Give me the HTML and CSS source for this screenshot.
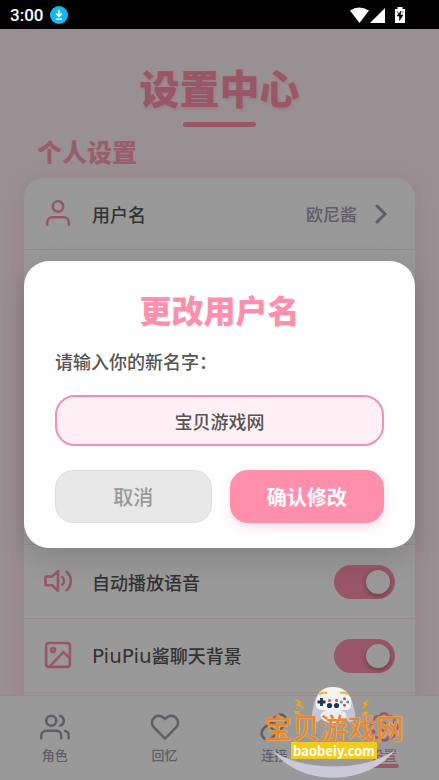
FILE: index.html
```
<!DOCTYPE html>
<html lang="zh-CN">
<head>
  <meta charset="UTF-8" />
  <meta name="viewport" content="width=device-width, initial-scale=1.0"/>
  <title>设置中心</title>
  <link rel="stylesheet" href="styles.css">
</head>
<body>
  <header class="status-bar">
    <span class="time">3:00</span>
    <svg class="download" viewBox="0 0 18 18">
      <circle cx="9" cy="9" r="9" fill="#12b9f5"/>
      <path d="M9 4v6M6.2 7.500L9 10.300 11.800 7.500M6 13.200h6" fill="none" stroke="#fff" stroke-width="1.600"/>
    </svg>
    <svg class="signals" viewBox="0 0 56 18">
      <path d="M0 4.500Q9-1.500 19 4.500L9.500 17z" fill="#fff"/>
      <path d="M20 17L35 2v15z" fill="#fff"/>
      <path d="M47.500 1h5v2h2.500v14h-10V3h2.500z" fill="#fff"/>
      <path d="M51 5l-4 5h2.500v4.500L53 9h-2.500zM47 5l1.500 3M53 5v2" fill="#000" stroke="#000" stroke-width=".6"/>
    </svg>
  </header>

  <div class="screen">
    <main class="settings">
      <h1>设置中心</h1>
      <h2>个人设置</h2>
      <ul class="card">
        <li class="row row-link">
          <svg class="icon" viewBox="0 0 24 24"><circle cx="12" cy="5" r="4.800"/><path d="M2 22v-2a5 5 0 0 1 5-5h10a5 5 0 0 1 5 5v2"/></svg>
          <span class="label">用户名</span>
          <span class="value">欧尼酱</span>
          <svg class="chevron" viewBox="0 0 12 18"><path d="M2 1l8 8-8 8"/></svg>
        </li>
        <li class="row row-group"></li>
        <li class="row">
          <svg class="icon" viewBox="0 0 24 24"><path d="M12 2L6.500 7H.5v8h6l5.500 5zM16 7.500a5 5 0 0 1 0 7M20 2.500a11.500 11.500 0 0 1 0 17"/></svg>
          <label class="label" for="autoplay">自动播放语音</label>
          <input class="switch" type="checkbox" id="autoplay" checked />
        </li>
        <li class="row">
          <svg class="icon" viewBox="0 0 24 24"><rect x="1" y="0" width="22" height="22" rx="2.500"/><circle cx="7.500" cy="6.500" r="1.800"/><path d="M23 14l-6-5.500L4 22"/></svg>
          <label class="label" for="chatbg"><span class="latin">PiuPiu</span>酱聊天背景</label>
          <input class="switch" type="checkbox" id="chatbg" checked />
        </li>
        <li class="row"></li>
      </ul>
    </main>

    <nav class="tabs">
      <a href="#roles">
        <svg viewBox="0 0 24 24"><path d="M17 21v-2a4 4 0 0 0-4-4H5a4 4 0 0 0-4 4v2"/><circle cx="9" cy="7" r="4"/><path d="M23 21v-2a4 4 0 0 0-3-3.870M16 3.130a4 4 0 0 1 0 7.750"/></svg>
        <span>角色</span>
      </a>
      <a href="#memories">
        <svg viewBox="0 0 24 24"><path d="M20.840 4.610a5.500 5.500 0 0 0-7.780 0L12 5.670l-1.060-1.060a5.500 5.500 0 0 0-7.780 7.780L12 21.230l8.840-8.840a5.500 5.500 0 0 0 0-7.780z"/></svg>
        <span>回忆</span>
      </a>
      <a href="#connect">
        <svg viewBox="0 0 24 24"><path d="M10 13a5 5 0 0 0 7.540.540l3-3a5 5 0 0 0-7.070-7.070l-1.720 1.710"/><path d="M14 11a5 5 0 0 0-7.540-.540l-3 3a5 5 0 0 0 7.070 7.070l1.710-1.710"/></svg>
        <span>连接</span>
      </a>
      <a href="#settings" class="active">
        <svg viewBox="0 0 24 24"><circle cx="12" cy="12" r="3"/><path d="M8.600 3.900a3.500 3.500 0 0 1 6.800 0a3.500 3.500 0 0 1 4.700 4.700a3.500 3.500 0 0 1 0 6.800a3.500 3.500 0 0 1-4.700 4.700a3.500 3.500 0 0 1-6.800 0a3.500 3.500 0 0 1-4.700-4.700a3.500 3.500 0 0 1 0-6.800a3.500 3.500 0 0 1 4.700-4.700z"/></svg>
        <span>设置</span>
      </a>
    </nav>

    <div class="overlay">
      <form class="modal" role="dialog" aria-labelledby="modal-title">
        <h3 id="modal-title">更改用户名</h3>
        <label for="username">请输入你的新名字：</label>
        <input type="text" id="username" value="宝贝游戏网" />
        <div class="actions">
          <button type="button" class="cancel">取消</button>
          <button type="button" class="confirm">确认修改</button>
        </div>
      </form>
    </div>

    <div class="brand">
      <svg class="brand-art" viewBox="0 0 142 94">
        <path d="M9 64C35 84 98 88 132 64C105 99 40 103 9 64z" fill="#c9c9d8"/>
        <path d="M52 14Q56 1 70 1T89 14L92 27Q93 34 88 36Q84 36 81 30L60 30Q57 36 53 36Q48 34 49 27z" fill="#c3c5d6"/>
        <path d="M53 14Q57 1 70 1T88 14Q90 24 82 24H59Q51 24 53 14z" fill="#f4f4f4"/>
        <ellipse cx="70.500" cy="30" rx="13" ry="7" fill="#ececf0"/>
        <path d="M56 8.500q4-3 8-1.500M77 7q4-1.500 8 1.500" fill="none" stroke="#efb52f" stroke-width="2"/>
        <path d="M58.500 12v8M54.500 16h8" stroke="#20364e" stroke-width="2.800"/>
        <circle cx="81.500" cy="12.800" r="1.500" fill="#d94c4c"/><circle cx="81.500" cy="19.200" r="1.500" fill="#d94c4c"/>
        <circle cx="78.300" cy="16" r="1.500" fill="#38a7b8"/><circle cx="84.700" cy="16" r="1.500" fill="#38a7b8"/>
        <circle cx="66.500" cy="14.500" r="1.500" fill="#d94c4c"/><circle cx="73.500" cy="14.500" r="1.500" fill="#d94c4c"/>
        <circle cx="66.500" cy="19.500" r="2.600" fill="#20364e"/><circle cx="73.500" cy="19.500" r="2.600" fill="#20364e"/>
        <path d="M31 12l8 4-2 2 5 5-9-4 2-2zM31 25l6 0-1 2 4 2-8-1zM107 12l-8 6 3 1-4 5 8-6-3-1zM107 25l-8 1 2 1-3 3 8-3-2-1z" fill="#efa51d"/>
      </svg>
      <span class="brand-name">宝贝游戏网</span>
      <span class="brand-site">baobeiy.com</span>
    </div>
  </div>
</body>
</html>
```

FILE: styles.css
```
* {
  box-sizing: border-box;
}

body {
  margin: 0;
  height: 100vh;
  display: flex;
  flex-direction: column;
  overflow: hidden;
  font-family: "Noto Sans CJK SC", sans-serif;
  font-weight: 500;
  color: #555;
}

h1, h2, h3 {
  margin: 0;
  color: #ff8fab;
  font-weight: 900;
}

svg {
  display: block;
  flex: none;
}

.status-bar {
  display: flex;
  align-items: center;
  height: 29px;
  padding: 0 33px 0 10px;
  background: #000;
  color: #fff;
}

.time {
  font-family: Roboto, sans-serif;
  font-size: 17px;
}

.download {
  width: 18px;
  height: 18px;
  margin-left: 7px;
}

.signals {
  width: 56px;
  height: 18px;
  margin-left: auto;
}

.screen {
  position: relative;
  flex: 1;
  min-height: 0;
  display: flex;
  flex-direction: column;
  background: #fff0f5;
}

.settings {
  flex: 1;
  min-height: 0;
  overflow: hidden;
  padding: 32px 24px 0;
}

h1 {
  font-size: 40px;
  line-height: 52px;
  text-align: center;
  text-shadow: 1px 2px 3px rgba(255, 143, 171, 0.3);
}

h1::after {
  content: "";
  display: block;
  width: 73px;
  height: 5px;
  margin: 9px auto 0;
  border-radius: 3px;
  background: #ff8fab;
}

h2 {
  padding: 6px 13px 9px;
  font-size: 25px;
  line-height: 36px;
  opacity: 0.85;
}

.card {
  margin: 0;
  padding: 0;
  list-style: none;
  background: #fff;
  border-radius: 20px;
  box-shadow: 0 4px 20px rgba(255, 143, 171, 0.3);
}

.row {
  display: flex;
  align-items: center;
  height: 74px;
  padding: 0 20px;
  border-bottom: 1px solid #ffe4ec;
  font-size: 18px;
}

.row-link {
  height: 72px;
  padding-right: 28px;
}

.row-group {
  height: 295px;
}

.icon {
  width: 26px;
  height: 26px;
  margin: 0 21px 0 1px;
  overflow: visible;
  fill: none;
  stroke: #ff8fab;
  stroke-width: 2.4;
  stroke-linejoin: round;
  stroke-linecap: round;
}

.label {
  flex: 1;
  line-height: 26px;
}

.latin {
  font-family: "DejaVu Sans", sans-serif;
  font-size: 20px;
}

.value {
  font-size: 17px;
  color: #a299ab;
}

.chevron {
  width: 12px;
  height: 18px;
  margin-left: 18px;
  overflow: visible;
  fill: none;
  stroke: #a299ab;
  stroke-width: 3;
  stroke-linecap: round;
}

.switch {
  appearance: none;
  width: 61px;
  height: 34px;
  margin: 0;
  padding: 5px;
  border-radius: 17px;
  background: #ddd;
}

.switch::before {
  content: "";
  display: block;
  width: 24px;
  height: 24px;
  border-radius: 50%;
  background: #fff;
  box-shadow: 0 2px 5px rgba(0, 0, 0, 0.3);
}

.switch:checked {
  background: #ff8fab;
}

.switch:checked::before {
  margin-left: auto;
}

.tabs {
  display: flex;
  height: 85px;
  background: #fff;
  border-top: 1px solid #ffe4ec;
}

.tabs a {
  flex: 1;
  display: flex;
  flex-direction: column;
  align-items: center;
  padding-top: 16px;
  color: #a299ab;
  font-size: 13px;
  line-height: 18px;
  text-decoration: none;
}

.tabs svg {
  width: 30px;
  height: 30px;
  margin-bottom: 4px;
  fill: none;
  stroke: currentColor;
  stroke-width: 2;
  stroke-linejoin: round;
  stroke-linecap: round;
}

.tabs .active {
  color: #ff8fab;
}

.tabs .active::after {
  content: "";
  width: 30px;
  height: 4px;
  border-radius: 2px;
  background: #ff8fab;
}

.overlay {
  position: absolute;
  inset: 0;
  display: flex;
  align-items: center;
  padding: 0 24px;
  background: rgba(0, 0, 0, 0.4);
}

.modal {
  flex: 1;
  padding: 24px 31px 25px;
  background: #fff;
  border-radius: 25px;
  box-shadow: 0 10px 30px rgba(0, 0, 0, 0.15);
}

.modal h3 {
  font-size: 32px;
  line-height: 48px;
  text-align: center;
}

.modal label {
  display: block;
  margin: 14px 0 20px;
  font-size: 18px;
  line-height: 28px;
}

.modal input {
  display: block;
  width: 100%;
  height: 51px;
  padding: 0 16px;
  border: 2px solid #f291ab;
  border-radius: 20px;
  background: #fff0f5;
  color: #555;
  font: inherit;
  font-size: 18px;
  text-align: center;
}

.actions {
  display: flex;
  gap: 18px;
  margin-top: 24px;
}

.actions button {
  flex: 1;
  height: 53px;
  border: 0;
  border-radius: 18px;
  font: inherit;
  font-size: 20px;
}

.actions .cancel {
  border: 1px solid #ddd;
  background: #e8e8e8;
  color: #999;
}

.actions .confirm {
  background: #ff8fab;
  color: #fff;
  font-weight: 700;
  box-shadow: 0 4px 12px rgba(255, 143, 171, 0.3);
}

.brand {
  position: absolute;
  right: 34px;
  bottom: 0;
  width: 142px;
  height: 94px;
  display: flex;
  flex-direction: column;
  align-items: center;
  padding-top: 27px;
}

.brand-art {
  position: absolute;
  inset: 0;
  width: 142px;
  height: 94px;
}

.brand-name {
  position: relative;
  color: #e8862a;
  font-size: 28px;
  line-height: 29px;
  white-space: nowrap;
  text-shadow: 0 0 1px #ffe9c8;
}

.brand-site {
  position: relative;
  padding: 0 2px;
  background: #f2cb1d;
  color: #fff;
  font-size: 13px;
  font-weight: 700;
  line-height: 17px;
}
```
